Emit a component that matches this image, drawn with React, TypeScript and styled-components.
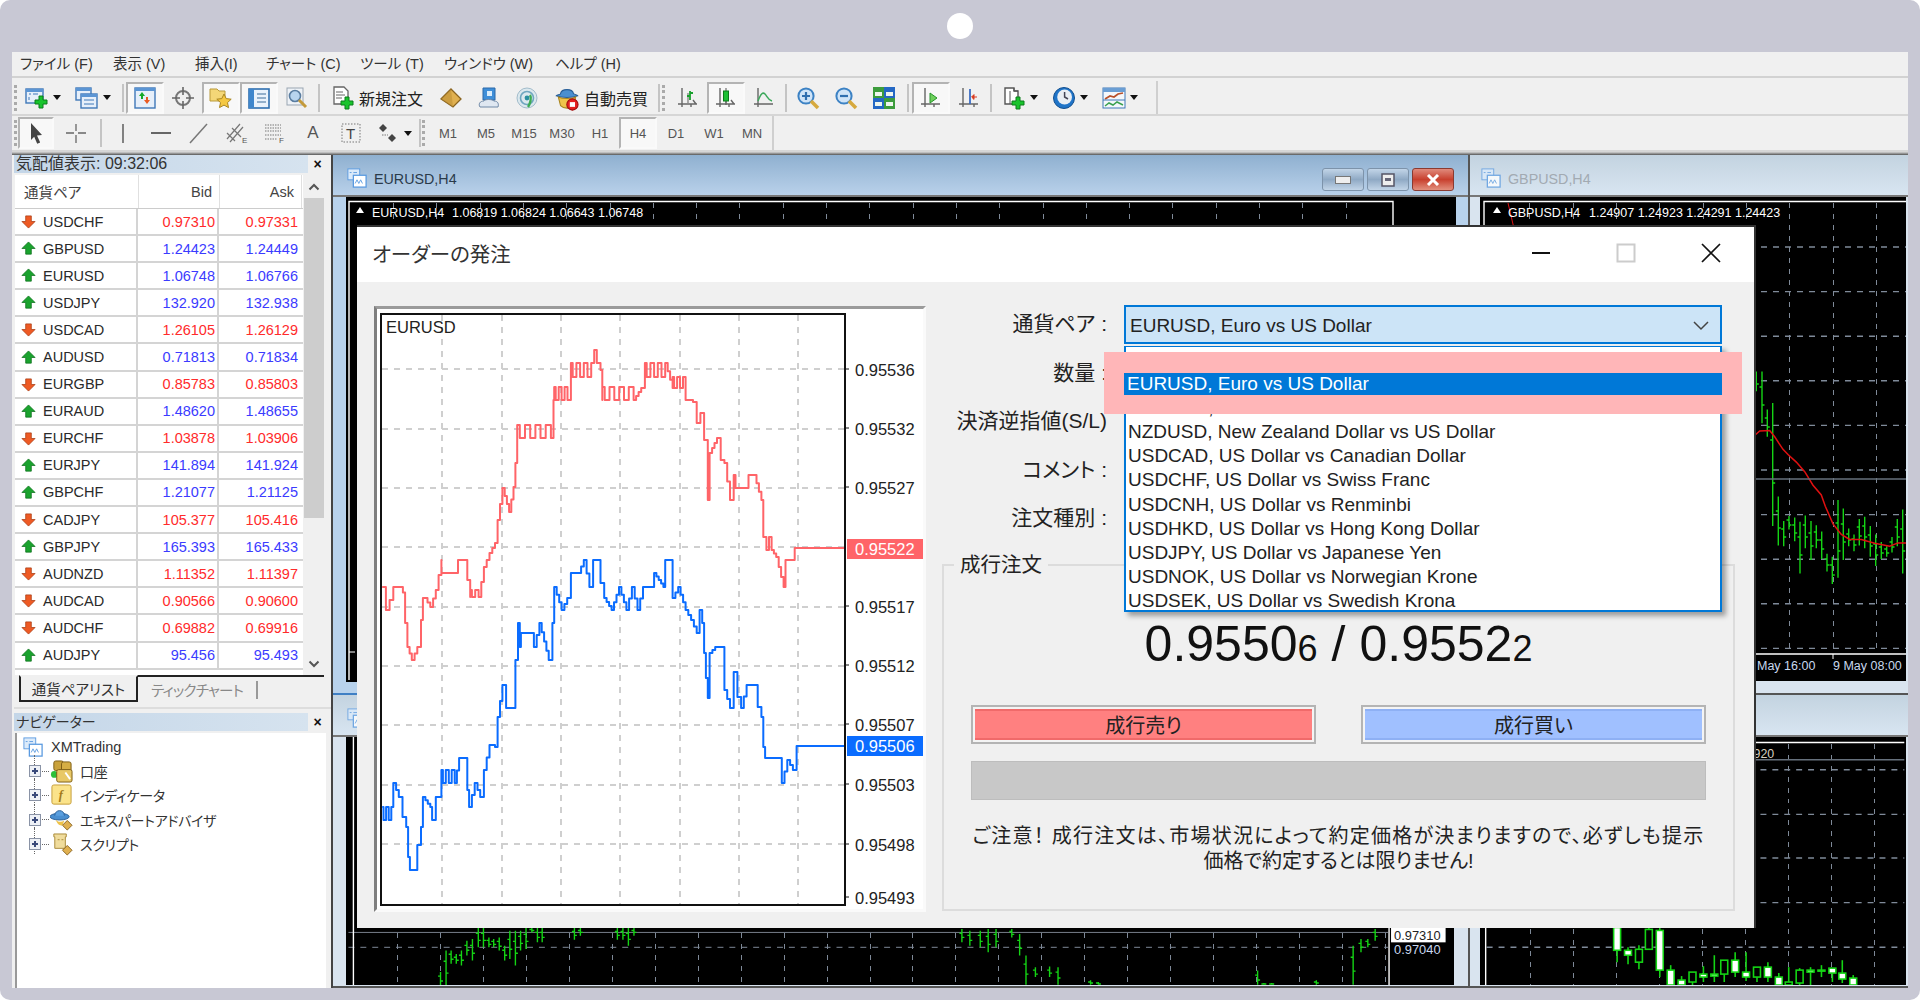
import React from "react";
import styled, { createGlobalStyle } from "styled-components";

const FONT = `"Liberation Sans", "Noto Sans CJK JP", sans-serif`;

const Global = createGlobalStyle`
  html, body { margin: 0; padding: 0; background: #fff; }
  body { font-family: ${FONT}; font-feature-settings: "palt"; color: #1c1c1c; }
  * { box-sizing: border-box; }
`;

/* ---------- shell ---------- */
const Stage = styled.div`
  width: 1920px; height: 1000px; background: #c8c8d4; border-radius: 10px;
  padding: 0 12px 12px; display: flex; flex-direction: column; overflow: hidden;
`;
const StageTop = styled.div`height: 52px; display: flex; align-items: center; justify-content: center; flex: none;`;
const Dot = styled.div`width: 26px; height: 26px; border-radius: 50%; background: #fff;`;
const Win = styled.div`flex: 1; min-height: 0; display: flex; flex-direction: column; background: #f0f0f0; overflow: hidden;`;

const MenuBar = styled.div`height: 26px; flex: none; display: flex; align-items: center; padding: 0 0 3px 8px; border-bottom: 2px solid #d2d2d2; font-size: 14.5px; color: #333;`;
const MenuItem = styled.span<{ $w: number }>`width: ${p => p.$w}px; flex: none; white-space: nowrap;`;

const ToolRow = styled.div<{ $h: number; $top?: number }>`height: ${p => p.$h}px; padding-top: ${p => p.$top ?? 0}px; flex: none; display: flex; border-bottom: 2px solid #d6d6d6;`;
const Tools = styled.div<{ $w: number }>`
  width: ${p => p.$w}px; flex: none; display: flex; align-items: center; border-right: 2px solid #cfcfcf; padding-left: 2px;
`;
const Grip = styled.i<{ $gap?: number }>`width: 4px; height: 26px; margin-right: ${p => p.$gap ?? 3}px; flex: none; border-left: 3px dotted #aaa;`;
const Sep = styled.i<{ $w?: number }>`width: ${p => p.$w ?? 6}px; height: 28px; flex: none; display: flex; justify-content: center; &::after { content: ""; width: 2px; background: #c4c4c4; }`;
const ToolBtn = styled.div<{ $w?: number; $on?: boolean }>`
  width: ${p => p.$w ?? 38}px; height: 32px; flex: none; display: flex; align-items: center; justify-content: center; gap: 4px;
  font-size: 16px; color: #222; white-space: nowrap;
  ${p => p.$on ? `background: #f8f8f8; border: 2px solid; border-color: #b4b4b4 #fafafa #fafafa #b4b4b4;` : ""}
`;
const TfBtn = styled(ToolBtn)`font-size: 13px; color: #555; letter-spacing: 0;`;
const Caret = styled.i`width: 0; height: 0; border: 4px solid transparent; border-top: 5px solid #111; border-bottom: 0; flex: none;`;

const DarkLine = styled.div`height: 3px; flex: none; background: linear-gradient(#d4d4d4, #555);`;
const Work = styled.div`flex: 1; min-height: 0; display: flex; position: relative;`;

/* ---------- left panel ---------- */
const Side = styled.div`width: 321px; flex: none; display: flex; flex-direction: column; padding-left: 2px; border-right: 2px solid #444; position: relative;`;
const PanelHead = styled.div`height: 18px; flex: none; display: flex; align-items: center; color: #333;`;
const PanelBar = styled.div<{ $size: number }>`width: 294px; height: 18px; padding-left: 2px; line-height: 18px; font-size: ${p => p.$size}px; background: linear-gradient(90deg, #c4d6e8, #d6e3ef); white-space: nowrap;`;
const PanelX = styled.b`flex: 1; text-align: center; font-size: 14px; color: #111; padding-right: 4px;`;
const WatchWrap = styled.div`height: 500px; flex: none; margin-top: 2px; display: flex; overflow: hidden; padding-left: 1px;`;
const Table = styled.div`width: 288px; flex: none; background: #fff; display: flex; flex-direction: column;`;
const HeadRow = styled.div`height: 34px; flex: none; display: grid; grid-template-columns: 124px 81px 82px; font-size: 14.5px; color: #444; border-bottom: 1px solid #ccc;`;
const HeadCell = styled.div<{ $right?: boolean }>`
  display: flex; align-items: center; justify-content: ${p => p.$right ? "flex-end" : "flex-start"};
  padding: 0 ${p => p.$right ? "7px" : "0"} 0 ${p => p.$right ? "0" : "9px"}; border-right: 1px solid #e0e0e0;
`;
const QuoteRow = styled.div`height: 27.1px; flex: none; display: grid; grid-template-columns: 123px 81px 84px; border-bottom: 2px solid #d4d4d4;`;
const NameCell = styled.div`display: flex; align-items: center; gap: 7px; padding-left: 6px; font-size: 14.5px; color: #2a2a2a; border-right: 2px solid #d4d4d4;`;
const PriceCell = styled.div<{ $up: boolean; $last?: boolean }>`
  display: flex; align-items: center; justify-content: flex-end; padding-right: ${p => p.$last ? "5px" : "2px"};
  font-size: 14.5px; color: ${p => p.$up ? "#3b3bff" : "#ff2b2b"}; ${p => p.$last ? "" : "border-right: 2px solid #d4d4d4;"}
`;
const Scroll = styled.div`width: 21px; margin-left: 0; flex: none; display: flex; flex-direction: column; align-items: center; background: #f0f0f0;`;
const ScrollEnd = styled.div`height: 23px; flex: none; display: flex; align-items: center; justify-content: center;`;
const ScrollThumb = styled.div`width: 20px; height: 320px; background: #cdcdcd; flex: none;`;
const ScrollRest = styled.div`flex: 1;`;
const Tabs = styled.div`height: 32px; flex: none; display: flex; border-top: 2px solid #222; margin-left: 5px; margin-right: 7px; font-size: 14.5px;`;
const Tab = styled.div`width: 119px; height: 27px; margin-top: -2px; border: 2px solid #222; border-top: 2px solid #f0f0f0; border-right-width: 2px; background: #f0f0f0; display: flex; align-items: center; justify-content: center; color: #333;`;
const TabOff = styled.div`padding-left: 13px; height: 25px; display: flex; align-items: center; color: #888; white-space: nowrap; letter-spacing: -.8px; &::after { content: ""; width: 2px; height: 18px; background: #999; margin-left: 13px; }`;
const NavGap = styled.div`height: 6px; flex: none; border-top: 2px solid #ddd;`;
const NavTree = styled.div`flex: 1; margin: 2px 5px 0 1px; background: #fff; border-left: 2px solid #999; padding-top: 2px; font-size: 14.5px; color: #333;`;
const TreeRoot = styled.div`height: 24px; display: flex; align-items: center; gap: 8px; padding-left: 6px;`;
const TreeRow = styled.div`height: 24.3px; display: flex; align-items: center; padding-left: 12px; position: relative;
  &::before { content: ""; position: absolute; left: 17px; top: -4px; height: 26px; border-left: 1px dotted #666; }
`;
const PlusBox = styled.div`width: 12px; height: 12px; border: 1px solid #8a93a6; background: #eef1f6; position: relative; z-index: 1; flex: none;
  &::before { content: ""; position: absolute; left: 2px; right: 2px; top: 4px; height: 2px; background: #3a4a7a; }
  &::after { content: ""; position: absolute; top: 2px; bottom: 2px; left: 4px; width: 2px; background: #3a4a7a; }
`;
const TreeDots = styled.i`width: 7px; border-top: 1px dotted #666; margin: 0 1px 0 1px; flex: none;`;
const TreeLabel = styled.span`margin-left: 7px; white-space: nowrap; font-size: 14px; letter-spacing: -.3px;`;

/* ---------- MDI ---------- */
const Mdi = styled.div`flex: 1; min-width: 0; display: grid; grid-template-columns: 1137px 1fr; grid-template-rows: 540px 1fr; background: #3c3c3c;`;
const ChartWin = styled.div<{ $active?: boolean; $right?: boolean }>`
  display: flex; flex-direction: column; overflow: hidden; min-height: 0;
  padding: 0 ${p => p.$right ? "0" : "10px"} ${p => p.$right ? "0" : "10px"} ${p => p.$right ? "10px" : "13px"};
  background: ${p => p.$active ? "#b8d2ec" : "#d9e4ef"};
  border-right: ${p => p.$right ? "0" : "2px solid #555"};
  border-bottom: 2px solid ${p => p.$active ? "#3f7fc4" : "#555"};
`;
const ChartTitle = styled.div<{ $active?: boolean }>`
  height: 42px; flex: none; margin: 0 -10px 0 -13px; padding: 13px 14px 0 14px;
  display: flex; align-items: flex-start; gap: 7px; font-size: 14.3px; line-height: 22px;
  background: linear-gradient(${p => p.$active ? "#8fb0d0, #b9d1ea" : "#c3d3e0, #d8e5f1"});
  color: ${p => p.$active ? "#2a3a4a" : "#a2aab2"};
  border-bottom: 2px solid #777;
`;
const TitleBtns = styled.div`margin-left: auto; display: flex; gap: 3px;`;
const TitleBtn = styled.div<{ $close?: boolean }>`
  width: 42px; height: 23px; border: 1px solid ${p => p.$close ? "#8b3a30" : "#7d93aa"}; border-radius: 3px;
  background: linear-gradient(${p => p.$close ? "#e08a7c, #c8402e 50%, #e2907e" : "#c2d5e8, #8fa9c4 50%, #c2d5e8"});
  display: flex; align-items: center; justify-content: center;
`;
const ChartSvg = styled.svg`display: block; flex: none; background: #000;`;

/* ---------- dialog ---------- */
const Dialog = styled.div`
  position: absolute; left: 345px; top: 70px; width: 1399px; height: 703px; background: #f0f0f0;
  border-top: 2px solid #333; border-right: 2px solid #333; display: flex; flex-direction: column; color: #222;
`;
const DlgTitle = styled.div`height: 55px; flex: none; background: #fff; display: flex; align-items: center; padding: 0 0 4px 15px; font-size: 20.5px; color: #333;`;
const DlgCtl = styled.div`margin-left: auto; display: flex; align-items: center; gap: 65px; padding-right: 33px;`;
const DlgBody = styled.div`flex: 1; min-height: 0; display: flex; padding: 18px 19px 0 17px; gap: 16px;`;
const Sunken = styled.div`width: 552px; height: 606px; margin-top: 6px; flex: none; border: 3px solid; border-color: #9b9b9b #fafafa #fafafa #7e7e7e; background: #fff;`;
const Right = styled.div`flex: 1; min-width: 0; display: flex; flex-direction: column; position: relative;`;
const Form = styled.div`display: grid; grid-template-columns: 165px 598px; column-gap: 17px; grid-auto-rows: 48.5px; align-items: center; margin-bottom: 21.5px;`;
const Label = styled.div`text-align: right; font-size: 21px; white-space: nowrap; color: #222; padding-bottom: 4px;`;
const Combo = styled.div`height: 39px; margin-top: 1px; border: 2px solid #0078d7; background: #cce4f7; display: flex; align-items: center; justify-content: space-between; padding: 3px 11px 0 4px; font-size: 19px; color: #222;`;
const DropList = styled.div`
  position: absolute; left: 182px; top: 46px; width: 598px; height: 266px; background: #fff; z-index: 2; overflow: hidden;
  border: 2px solid #0078d7; border-top-width: 1px; box-shadow: 4px 4px 5px rgba(0,0,0,.35);
`;
const DropInner = styled.div`margin-top: 1px; font-size: 19px;`;
const DropItem = styled.div<{ $covered?: boolean }>`
  height: 24.1px; line-height: 24.1px; padding-left: 2px; white-space: nowrap; color: #222;
  ${p => p.$covered ? "visibility: hidden;" : ""}
`;
const Highlight = styled.div`
  position: absolute; left: 162px; top: 52px; width: 638px; height: 62px; background: #ffb6b8; z-index: 3;
  display: flex; align-items: center; padding-top: 2px;
`;
const HighlightItem = styled.div`width: 598px; margin-left: 20px; height: 22px; line-height: 22px; padding-left: 3px; background: #0078d7; color: #fff; font-size: 19px;`;
const Group = styled.div`height: 347px; border: 2px solid #dcdcdc; position: relative; display: flex; flex-direction: column; align-items: center; padding-top: 50px;`;
const Legend = styled.div`position: absolute; left: 10px; top: -13px; padding: 0 6px; background: #f0f0f0; font-size: 20.5px; line-height: 24px;`;
const Price = styled.div`height: 56px; display: flex; align-items: baseline; font-size: 50px; line-height: 56px; color: #111; white-space: nowrap; font-family: "Liberation Sans", sans-serif;`;
const PriceSmall = styled.span`font-size: 36px;`;
const PriceSlash = styled.span`margin: 0 14px;`;
const Actions = styled.div`width: 735px; margin-top: 33px; display: flex; justify-content: space-between;`;
const Trade = styled.div`width: 345px; height: 39px; padding: 2px; border: 2px solid #b4b4b4; background: #f4f4f4; font-size: 20px; color: #222; display: flex;`;
const TradeFace = styled.div<{ $buy?: boolean }>`
  flex: 1; display: flex; align-items: center; justify-content: center; background: ${p => p.$buy ? "#a0c0ff" : "#ff8080"};
  border-bottom: 2px solid ${p => p.$buy ? "#8eb0f4" : "#f06a6a"}; border-top: 2px solid ${p => p.$buy ? "#8eb0f4" : "#f06a6a"};
`;
const ProgressBar = styled.div`width: 735px; height: 39px; margin-top: 17px; background: #c8c8c8; border: 1px solid #bdbdbd;`;
const Note = styled.div`width: 760px; margin-top: 24px; text-align: center; font-size: 20px; line-height: 24.5px; color: #222; white-space: nowrap;`;
const NoteWide = styled.span`letter-spacing: 1.24px;`;

/* ---------- icons ---------- */
const Ico: React.FC<{ s?: number; children: React.ReactNode }> = ({ s = 24, children }) => (
  <svg viewBox="0 0 24 24" width={s} height={s} style={{ flex: "none", display: "block" }}>{children}</svg>
);
const GreenPlus = ({ x = 11, y = 11 }: { x?: number; y?: number }) => (
  <path transform={`translate(${x} ${y})`} d="M4 0h4v4h4v4H8v4H4V8H0V4h4z" fill="#18c42c" stroke="#0a7d1a" strokeWidth="1" />
);
const MiniWin = ({ x, y, w, h }: { x: number; y: number; w: number; h: number }) => (
  <g><rect x={x} y={y} width={w} height={h} fill="#e6effa" stroke="#3f78b8" strokeWidth="1.4" /><rect x={x} y={y} width={w} height="3" fill="#5b95d4" /></g>
);
const Axes = () => (
  <g stroke="#666" strokeWidth="1.4" fill="none"><path d="M6 2v19M2 18h19M17 14l3 4M15 18v3" /><path d="M12 7v11" stroke="#888" /></g>
);
const NewChartI = () => <Ico><MiniWin x={1} y={3} w={17} h={14} /><path d="M4 8h2M4 11v3M8 8h5" stroke="#3f78b8" fill="none" /><GreenPlus x={10} y={10} /></Ico>;
const ProfilesI = () => <Ico><MiniWin x={1} y={2} w={15} h={12} /><MiniWin x={6} y={8} w={16} h={14} /><path d="M9 14h10M9 18h10" stroke="#3f78b8" /></Ico>;
const WatchI = () => <Ico><MiniWin x={2} y={2} w={20} h={20} /><path d="M9 6l3 4H10v3H8v-3H6z" fill="#12a82a" /><path d="M14 18l-3-4h2v-3h2v3h2z" fill="#ea5a22" /></Ico>;
const CrossI = () => <Ico><circle cx="12" cy="12" r="7" fill="none" stroke="#777" strokeWidth="2" /><path d="M12 1v8M12 15v8M1 12h8M15 12h8" stroke="#666" strokeWidth="1.6" /></Ico>;
const NavI = () => <Ico><path d="M1 3h7l2 2h6v10H1z" fill="#f4d777" stroke="#b99a3a" /><path d="M15 8l2.2 4.6 5 .6-3.7 3.4 1 5-4.5-2.5-4.5 2.5 1-5-3.7-3.4 5-.6z" fill="#f5c842" stroke="#a98520" /></Ico>;
const TermI = () => <Ico><rect x="2" y="3" width="20" height="19" fill="#eaf2fb" stroke="#2f6fb0" strokeWidth="1.6" /><rect x="2" y="3" width="5" height="19" fill="#3f86cc" /><path d="M10 8h9M10 12h9M10 16h9" stroke="#7799bb" strokeWidth="1.4" /></Ico>;
const TesterI = () => <Ico><rect x="2" y="2" width="16" height="17" fill="#eef2f7" stroke="#99a5b2" /><circle cx="10" cy="10" r="5.5" fill="#b8d4ee" stroke="#5a7da0" strokeWidth="1.6" /><path d="M14 14l7 7" stroke="#c49a3a" strokeWidth="3" /></Ico>;
const OrderI = () => <Ico><path d="M3 1h10l4 4v13H3z" fill="#fff" stroke="#666" strokeWidth="1.3" /><path d="M5 6h7M5 9h9M5 12h6" stroke="#666" /><GreenPlus x={10} y={11} /></Ico>;
const DiamondI = () => <Ico><path d="M12 3l10 10-8 8L2 13z" fill="#e0b050" stroke="#8a6420" strokeWidth="1.3" /><path d="M12 3l-10 10 12 8z" fill="#b88a30" opacity=".5" /></Ico>;
const MarketI = () => <Ico><path d="M6 2h12v12H6z" fill="#3e8ed8" stroke="#2a68a8" /><path d="M10 5h5v5h-5z" fill="#d9ecfb" /><path d="M3 21c-2-3 0-6 4-6 1-2 8-2 10 0 4 0 5 3 4 6z" fill="#dfe7f1" stroke="#6f88a6" /></Ico>;
const SignalI = () => <Ico><circle cx="12" cy="12" r="10" fill="#dbe8ee" stroke="#a2bccb" /><circle cx="12" cy="12" r="6.5" fill="none" stroke="#6fa6bf" strokeWidth="1.6" /><path d="M15 9c2 3 0 9-2 12" stroke="#3cab54" strokeWidth="2.4" fill="none" /><circle cx="12" cy="12" r="2.4" fill="#2a8fa0" /></Ico>;
const AutoI = () => <Ico s={26}><path d="M2 10c0-1 4-1 4-2 1-5 11-5 12 0 1 1 4 1 4 2-5 2-15 2-20 0z" fill="#4a8fd0" stroke="#2a5f98" /><path d="M4 11c4 2 12 2 16 0l-2 9c-3 2-9 2-12-1z" fill="#efc34a" stroke="#a98520" /><circle cx="17" cy="18" r="5.2" fill="#e62020" stroke="#a01010" /><rect x="14.6" y="15.8" width="4.8" height="4.4" fill="#fff" /></Ico>;
const BarI = () => <Ico><Axes /><path d="M14 5v9M11 10h3M14 7h3" stroke="#18a02c" strokeWidth="1.8" fill="none" /></Ico>;
const CandleI = () => <Ico><Axes /><path d="M12 2v17" stroke="#555" /><rect x="9.5" y="5" width="5" height="10" fill="#1cc034" stroke="#0c7a1c" /></Ico>;
const LineI = () => <Ico><g stroke="#666" strokeWidth="1.4" fill="none"><path d="M6 2v19M2 18h19" /></g><path d="M6 15c3-8 5-9 7-7s3 6 7 7" stroke="#3aa85a" strokeWidth="1.5" fill="none" /></Ico>;
const Lens = ({ minus }: { minus?: boolean }) => (
  <Ico><circle cx="10" cy="10" r="7.6" fill="#cfe4f8" stroke="#3c82c4" strokeWidth="2" /><path d="M15 15l7 7" stroke="#d6a93e" strokeWidth="3.6" /><path d={minus ? "M6 10h8" : "M6 10h8M10 6v8"} stroke="#2f6fb0" strokeWidth="2.2" /></Ico>
);
const TileI = () => <Ico><rect x="1" y="1" width="11" height="11" fill="#3c9c3c" /><rect x="12" y="1" width="11" height="11" fill="#2468c4" /><rect x="1" y="12" width="11" height="11" fill="#2468c4" /><rect x="12" y="12" width="11" height="11" fill="#3c9c3c" /><path d="M3 6h7v4H3zM14 6h7v4h-7zM3 16h7v4H3zM14 16h7v4h-7z" fill="#eef6ee" /></Ico>;
const ScrollI = () => <Ico><g stroke="#666" strokeWidth="1.4" fill="none"><path d="M6 2v19M2 18h19M15 18v3" /></g><path d="M11 7l7 5-7 5z" fill="#6fd05c" stroke="#28952c" /></Ico>;
const ShiftI = () => <Ico><g stroke="#666" strokeWidth="1.4" fill="none"><path d="M6 2v19M2 18h19M17 18v3" /></g><path d="M13 3v15" stroke="#3a6cc4" strokeWidth="1.8" /><path d="M20 11h-3V8.6L14.6 11l2.4 2.4V11" fill="#d83a20" stroke="#d83a20" /></Ico>;
const TemplI = () => <Ico><path d="M3 2h9v3h4v13H3z" fill="#fff" stroke="#555" strokeWidth="1.4" /><path d="M8 5v13M12 2v3h4" stroke="#555" fill="none" /><GreenPlus x={10} y={11} /></Ico>;
const ClockI = () => <Ico><circle cx="12" cy="12" r="10.5" fill="#1f74c8" stroke="#134f8f" /><circle cx="12.6" cy="11" r="7.4" fill="#e9eef4" /><path d="M12.6 6v5l3.4 2" stroke="#445" strokeWidth="1.5" fill="none" /></Ico>;
const IndI = () => <Ico><rect x="1" y="2" width="22" height="20" fill="#f4f7fb" stroke="#3f78b8" /><rect x="1" y="2" width="22" height="4" fill="#6a9ed4" /><path d="M3 13l5-3 4 1 4-3 5-1" stroke="#b8502a" strokeWidth="1.7" fill="none" /><path d="M1 14h22" stroke="#3f78b8" /><path d="M3 20l4-3 4 2 4-3 6 3" stroke="#3aa050" strokeWidth="1.5" fill="none" /></Ico>;
const CursorI = () => <Ico><path d="M7 2l11 12-5 .4 3.2 7-3 1.4-3-7L7 19z" fill="#444" /></Ico>;
const ThinCross = () => <Ico><path d="M12 3v7M12 14v8M2 12h8M14 12h8" stroke="#666" strokeWidth="1.3" /></Ico>;
const VertI = () => <Ico><path d="M12 3v19" stroke="#666" strokeWidth="1.6" /></Ico>;
const HorzI = () => <Ico><path d="M2 12h20" stroke="#666" strokeWidth="1.8" /></Ico>;
const TrendI = () => <Ico><path d="M3 22L20 3" stroke="#777" strokeWidth="1.5" /></Ico>;
const ChanI = () => <Ico><path d="M2 18L15 3M5 21L18 6M2 12l8 8M7 7l9 9" stroke="#777" strokeWidth="1.2" /><text x="17" y="22" fontSize="8" fill="#555" fontFamily="Liberation Sans">E</text></Ico>;
const FibI = () => <Ico><path d="M2 4h16M2 7h16M2 10h16M2 14h16M2 18h12" stroke="#777" strokeWidth="1.1" strokeDasharray="1.5 1" /><text x="16" y="22" fontSize="8" fill="#555" fontFamily="Liberation Sans">F</text></Ico>;
const LetterA = styled.span`font-size: 17px; color: #555; font-weight: 500;`;
const TextBoxI = () => <Ico><rect x="3" y="3" width="18" height="18" fill="none" stroke="#777" strokeDasharray="1.5 1.5" /><text x="7" y="18" fontSize="15" fill="#444" fontFamily="Liberation Sans">T</text></Ico>;
const ArrowsI = () => <Ico><path d="M7 3l4 4-4 4-4-4z" fill="#444" /><path d="M16 13l4 4-4 4-4-4z" fill="#444" /><path d="M6 14l6 0" stroke="#777" strokeDasharray="1.5 1" /></Ico>;

const ArrowUpI = () => <svg viewBox="0 0 16 16" width="15" height="15" style={{ flex: "none" }}><path d="M8 1l7 7h-4v6H5V8H1z" fill="#1aa32e" stroke="#0d6f1c" strokeWidth=".8" /></svg>;
const ArrowDownI = () => <svg viewBox="0 0 16 16" width="15" height="15" style={{ flex: "none" }}><path d="M5 2h6v6h4l-7 7-7-7h4z" fill="#ee5a24" stroke="#a83a10" strokeWidth=".8" /></svg>;
const ChartsDocI = ({ faded }: { faded?: boolean }) => (
  <svg viewBox="0 0 22 22" width="20" height="20" style={{ flex: "none", opacity: faded ? .8 : 1 }}>
    <rect x="1" y="1" width="13" height="12" fill="#dcebfa" stroke="#5a9ae0" /><rect x="7" y="8" width="14" height="13" fill="#fff" stroke="#5a9ae0" strokeWidth="1.4" />
    <path d="M3 5h2M7 5h4M9 17l2-4 2 4 2-4 2 4" stroke="#5a9ae0" fill="none" />
  </svg>
);
const TreeI: React.FC<{ children: React.ReactNode }> = ({ children }) => <svg viewBox="0 0 24 24" width="23" height="23" style={{ flex: "none" }}>{children}</svg>;
const AccI = () => <TreeI><circle cx="4.5" cy="15" r="3.5" fill="#2cc03a" /><rect x="4" y="1" width="10" height="10" rx="2" fill="#c9a13a" stroke="#7c5c14" /><rect x="12" y="2" width="10" height="10" rx="2" fill="#d6ae44" stroke="#7c5c14" /><rect x="7" y="10" width="16" height="13" rx="2" fill="#e8c866" stroke="#7c5c14" /><path d="M16 13l5 7" stroke="#fff" strokeWidth="2" /></TreeI>;
const IndTreeI = () => <TreeI><rect x="2" y="1" width="20" height="20" rx="2" fill="#fbe38a" stroke="#c49d3a" /><text x="9" y="16" fontSize="13" fontStyle="italic" fontWeight="700" fill="#a37a1a" fontFamily="Liberation Serif">f</text></TreeI>;
const ExpertI = () => <TreeI><ellipse cx="10" cy="9" rx="10" ry="3.5" fill="#4a8fd0" stroke="#2a5f98" /><path d="M5 8c0-7 10-7 10 0" fill="#5a9fdf" stroke="#2a5f98" /><path d="M6 12c2 3 6 3 9 1l-2 5c-3 1-6-2-7-6z" fill="#efc34a" /><path d="M18 13l5 5-5 5-5-5z" fill="#e0b050" stroke="#8a6420" /></TreeI>;
const ScriptI = () => <TreeI><path d="M4 1h13v3h-1v12H5V4H4z" fill="#f0dc9c" stroke="#a98a38" /><path d="M8 7h2M12 7h2" stroke="#a98a38" /><path d="M18 13l5 5-5 5-5-5z" fill="#e0b050" stroke="#8a6420" /></TreeI>;

/* ---------- data ---------- */
const quotes: [string, boolean, string, string][] = [
  ["USDCHF", false, "0.97310", "0.97331"], ["GBPUSD", true, "1.24423", "1.24449"],
  ["EURUSD", true, "1.06748", "1.06766"], ["USDJPY", true, "132.920", "132.938"],
  ["USDCAD", false, "1.26105", "1.26129"], ["AUDUSD", true, "0.71813", "0.71834"],
  ["EURGBP", false, "0.85783", "0.85803"], ["EURAUD", true, "1.48620", "1.48655"],
  ["EURCHF", false, "1.03878", "1.03906"], ["EURJPY", true, "141.894", "141.924"],
  ["GBPCHF", true, "1.21077", "1.21125"], ["CADJPY", false, "105.377", "105.416"],
  ["GBPJPY", true, "165.393", "165.433"], ["AUDNZD", false, "1.11352", "1.11397"],
  ["AUDCAD", false, "0.90566", "0.90600"], ["AUDCHF", false, "0.69882", "0.69916"],
  ["AUDJPY", true, "95.456", "95.493"],
];
const symbols = [
  "AUDUSD, Australian Dollar vs US Dollar",
  "EURUSD, Euro vs US Dollar",
  "GBPUSD, Great Britain Pound vs US Dollar",
  "NZDUSD, New Zealand Dollar vs US Dollar",
  "USDCAD, US Dollar vs Canadian Dollar",
  "USDCHF, US Dollar vs Swiss Franc",
  "USDCNH, US Dollar vs Renminbi",
  "USDHKD, US Dollar vs Hong Kong Dollar",
  "USDJPY, US Dollar vs Japanese Yen",
  "USDNOK, US Dollar vs Norwegian Krone",
  "USDSEK, US Dollar vs Swedish Krona",
];

type P = [number, number];
const zig = (x0: number, x1: number, a: number, b: number, step = 12): P[] => {
  const out: P[] = []; let i = 0;
  for (let x = x0; x < x1; x += step, i++) { out.push([x, i % 2 ? b : a]); out.push([x + step * .5, i % 2 ? a : b]); }
  return out;
};
const redTrace: P[] = [
  [60,587],[70,610],[80,600],[90,587],[110,587],[122,598],[122,623],[128,647],[140,660],[155,647],[165,620],[170,598],[175,598],[190,607],[205,590],[220,560],[220,573],[260,573],[265,560],[285,560],[290,580],[298,597],
  ...zig(298,325,590,597,9),[335,567],[350,553],[365,543],[372,520],[385,488],[403,512],[415,487],[420,463],[425,425],...zig(425,520,425,438,14),[523,400],...zig(525,565,387,400,8),[570,363],...zig(570,625,363,377,10),[633,350],[640,363],[650,370],[655,400],...zig(655,745,387,400,13),[760,388],[770,363],...zig(770,830,363,377,10),[845,388],...zig(845,870,377,388,8),[880,400],[900,402],[910,423],[920,413],[930,440],[940,500],[945,453],[965,438],[975,460],[985,463],[1000,500],[1010,475],[1015,488],[1045,488],[1050,475],[1065,475],[1085,500],[1090,537],...zig(1095,1115,537,550,7),[1125,557],[1145,587],[1150,560],[1170,560],[1175,548],[1310,548],
];
const blueTrace: P[] = [
  [60,807],...zig(60,82,807,820,7),[90,783],[105,797],[115,817],[125,827],[130,857],[135,870],[150,870],[155,845],[165,827],[170,797],[190,807],[195,820],[205,797],[215,797],[220,770],...zig(220,260,770,783,8),[268,758],[285,758],[290,790],[295,807],[310,783],[325,797],[335,770],[350,745],[365,747],[372,717],[385,685],[395,708],[410,708],[420,660],[427,623],[432,647],[435,633],[470,633],[470,647],[485,623],[510,660],[520,623],[525,587],[545,610],[560,598],[570,573],[590,573],[605,560],[620,587],[630,560],[640,560],[650,583],[660,598],[680,610],[700,587],[720,610],[735,587],[750,610],[765,587],[790,587],[795,573],[820,587],[825,560],[835,560],[845,598],[860,587],[880,610],[895,620],[910,633],[918,610],[925,623],[930,653],[935,678],[940,698],[945,653],[960,647],[975,647],[985,667],[985,690],[1000,708],[1010,672],[1020,697],[1030,708],[1045,685],[1065,685],[1075,707],[1085,717],[1090,747],[1095,758],[1130,758],[1140,783],[1155,760],[1170,770],[1180,746],[1310,746],
];
/* turns the traced points into the stair-step line the terminal draws */
const tracePts = (t: P[]) => {
  const out: string[] = [];
  t.forEach(([zx, y], i) => {
    const x = 360 + zx / 2.703;
    if (i === 0) { out.push(`${x.toFixed(1)},${y}`); return; }
    const [pzx, py] = t[i - 1];
    const px = 360 + pzx / 2.703;
    const dx = x - px, dy = y - py;
    const n = Math.max(1, Math.round(Math.abs(dy) > 3 ? dx / 2.5 : 1));
    for (let k = 1; k <= n; k++) {
      const sx = px + dx * k / n;
      const prevY = py + dy * (k - 1) / n;
      out.push(`${sx.toFixed(1)},${prevY.toFixed(1)}`);
      out.push(`${sx.toFixed(1)},${(py + dy * k / n).toFixed(1)}`);
    }
  });
  return out.join(" ");
};

const axisLabels: [string, number][] = [["0.95536",370],["0.95532",429],["0.95527",488],["0.95517",607],["0.95512",666],["0.95507",725],["0.95503",785],["0.95498",845],["0.95493",898]];
const gridX = [442, 502, 561, 620, 680, 739, 798];
const gridY = [369, 429, 488, 547, 607, 666, 725, 785, 844];

const PreviewChart = () => (
  <svg viewBox="377 309 546 600" width={546} height={600} style={{ display: "block" }} fontFamily="Liberation Sans" fontSize="16.5">
    {gridX.map(x => <path key={x} d={`M${x} 315V904`} stroke="#cfcfcf" strokeWidth="2" strokeDasharray="6 6" shapeRendering="crispEdges" />)}
    {gridY.map(y => <path key={y} d={`M382 ${y}H845`} stroke="#cfcfcf" strokeWidth="2" strokeDasharray="6 6" shapeRendering="crispEdges" />)}
    <polyline points={tracePts(redTrace)} fill="none" stroke="#ff6468" strokeWidth="2" strokeLinejoin="round" />
    <polyline points={tracePts(blueTrace)} fill="none" stroke="#0a6cff" strokeWidth="2" strokeLinejoin="round" />
    <rect x="381" y="314" width="464" height="591" fill="none" stroke="#111" strokeWidth="2" />
    <text x="386" y="333" fill="#222">EURUSD</text>
    {axisLabels.map(([t, y]) => <g key={t}><path d={`M845 ${y - 1}h4`} stroke="#111" /><text x="855" y={y + 6} fill="#222">{t}</text></g>)}
    <rect x="847" y="539" width="76" height="20" fill="#ff6468" /><text x="855" y="555" fill="#fff">0.95522</text>
    <rect x="847" y="736" width="76" height="20" fill="#0a6cff" /><text x="855" y="752" fill="#fff">0.95506</text>
  </svg>
);

type Bar = [number, number, number];
const grBars: Bar[] = [
  [55,75,122],[72,75,198],[88,165,230],[104,150,442],[121,372,488],[137,430,490],[153,418,450],[170,422,478],[186,432,555],[202,417,495],[219,430,523],[235,440,495],[251,455,520],[267,508,550],[283,515,580],[300,380,565],[316,400,523],[332,448,490],[348,462,502],[364,425,488],[380,420,495],[397,442,515],[413,462,537],[430,480,520],[446,490,515],[462,468,505],[478,425,490],[494,403,555],
];
const maPts = [[48,228],[65,216],[95,215],[110,230],[135,260],[150,272],[175,290],[200,313],[225,345],[250,368],[262,395],[285,437],[310,462],[335,474],[370,474],[410,483],[455,490],[480,482],[504,482]]
  .map(([x, y]) => `${(1740 + x / 3).toFixed(1)},${(340 + y / 2.376).toFixed(1)}`).join(" ");

const blBars1: Bar[] = [[316,990,1050],[330,990,1050],[345,1020,1050],[358,1025,1050],[373,1020,1060],[388,1045,1090],[402,1000,1085],[417,1000,1105],[431,1000,1060],[446,990,1055],[462,990,1005],[477,990,1035],[490,990,1035],[578,990,1027],[594,990,1015],[695,990,1027],[710,990,1027],[725,990,1045],[740,990,1015],[300,1025,1090],[285,1030,1075],[270,1060,1105],[256,1070,1100],[242,1060,1100],[228,1060,1165],[213,1125,1165]];
const blBars2: Bar[] = [[65,935,975],[80,940,985],[100,940,990],[115,935,1005],[130,935,990],[160,935,960],[175,950,1015],[187,1015,1103],[205,1050,1080],[232,1048,1080],[248,1050,1103],[310,1090,1103],[628,1060,1103],[740,1090,1103],[810,985,1103],[825,965,1005],[838,965,990],[852,935,970],[640,1098,1103],[655,1098,1103],[325,1095,1103]];

const dashed = "#7f8a99";
const rng = (a: number, n: number, s: number) => Array.from({ length: n }, (_, i) => a + i * s);

/* an OHLC bar: stem, open tick to the left, close tick to the right */
const Ohlc = ({ x, a, b }: { x: number; a: number; b: number }) => {
  const o = Math.round(a + (b - a) * .3), c = Math.round(a + (b - a) * .65);
  return <path d={`M${x} ${a}V${b}M${x - 2.5} ${o}H${x}M${x} ${c}H${x + 2.5}`} stroke="#14d414" strokeWidth="1.4" fill="none" />;
};

const TopLeftChart = () => (
  <ChartSvg viewBox="348 197 1110 485" width={1110} height={485} fontFamily="Liberation Sans" fontSize="12.5">
    {rng(395.5, 23, 43.3).map(x => <path key={x} d={`M${x} 203V226`} stroke={dashed} strokeDasharray="5 6" shapeRendering="crispEdges" />)}
    <path d="M351 680V201.5H1395V226" stroke="#fff" strokeWidth="1.4" fill="none" />
    <path d="M351 652H357" stroke="#fff" />
    <path d="M358 213l4-6 4 6z" fill="#fff" />
    <text x="374" y="217" fill="#fff">EURUSD,H4</text>
    <text x="454" y="217" fill="#fff">1.06819 1.06824 1.06643 1.06748</text>
  </ChartSvg>
);
const BottomLeftChart = () => (
  <ChartSvg viewBox="348 738 1108 250" width={1108} height={248} fontFamily="Liberation Sans" fontSize="13">
    <path d="M346 950H1394" stroke={dashed} strokeDasharray="6 6" />
    <path d="M346 935H1394" stroke="#77808c" />
    {rng(395.5, 24, 43.3).map(x => <path key={x} d={`M${x} 925V988`} stroke={dashed} strokeDasharray="5 6" shapeRendering="crispEdges" />)}
    {blBars1.map(([x, a, b], i) => <Ohlc key={"a" + i} x={+(360 + x / 2.703).toFixed(1)} a={600 + a / 3} b={600 + b / 3} />)}
    {blBars2.map(([x, a, b], i) => <Ohlc key={"b" + i} x={+(930 + x / 1.889).toFixed(1)} a={620 + a / 3} b={620 + b / 3} />)}
    <path d="M351 738V988M1395 738V988" stroke="#fff" strokeWidth="1.4" />
    <rect x="1397" y="925" width="55" height="20" fill="#fff" /><text x="1400" y="943" fill="#222">0.97310</text>
    <text x="1400" y="957" fill="#c8d8ee">0.97040</text>
  </ChartSvg>
);
const TopRightChart = () => (
  <ChartSvg viewBox="1482 197 426 484" width={426} height={484} fontFamily="Liberation Sans" fontSize="12.5">
    {rng(247, 10, 44.6).map(y => <path key={y} d={`M1487 ${y}H1908`} stroke={dashed} strokeDasharray="6 6" strokeWidth="1.4" />)}
    {[1531, 1575, 1618, 1661, 1705, 1748, 1791, 1835, 1878].map(x => <path key={x} d={`M${x} 203V653`} stroke={dashed} strokeDasharray="5 6" shapeRendering="crispEdges" />)}
    <path d="M1486 660V201.5H1908" stroke="#fff" strokeWidth="1.4" fill="none" />
    <path d="M1510 203l8 34" stroke="#e01010" />
    <path d="M1495 213l4-6 4 6z" fill="#fff" />
    <text x="1510" y="217" fill="#fff">GBPUSD,H4</text>
    <text x="1591" y="217" fill="#fff">1.24907 1.24923 1.24291 1.24423</text>
    {grBars.map(([x, a, b], i) => <Ohlc key={i} x={+(1740 + x / 3).toFixed(1)} a={+(340 + a / 2.376).toFixed(1)} b={+(340 + b / 2.376).toFixed(1)} />)}
    <polyline points={maPts} fill="none" stroke="#e01010" strokeWidth="1.5" />
    <path d="M1487 479H1908" stroke="#66707c" strokeWidth="1.6" />
    <path d="M1487 654H1908" stroke="#fff" strokeWidth="1.4" /><path d="M1835 654v5" stroke="#fff" />
    <text x="1759" y="670" fill="#c8d8ee">May 16:00</text>
    <text x="1835" y="670" fill="#c8d8ee">9 May 08:00</text>
  </ChartSvg>
);
type Candle = [number, number, number, number, number, boolean];
const candles: Candle[] = [
  [1618, 930, 953, 930, 965, true], [1629, 953, 958, 950, 967, true], [1640, 952, 965, 948, 972, false], [1650, 932, 952, 930, 952, false], [1661, 933, 973, 930, 980, true], [1672, 973, 988, 968, 988, true],
  [1683, 983, 988, 979, 988, true], [1694, 975, 985, 975, 988, false], [1705, 977, 980, 969, 985, true], [1716, 977, 979, 958, 985, true], [1726, 963, 977, 963, 985, false], [1737, 963, 975, 955, 980, true],
  [1748, 975, 980, 955, 984, true], [1759, 970, 980, 970, 985, false], [1770, 970, 980, 965, 985, true], [1781, 980, 988, 976, 988, true], [1791, 985, 988, 970, 988, false], [1802, 973, 986, 971, 988, false],
  [1813, 973, 975, 970, 988, true], [1824, 973, 974, 968, 980, true], [1835, 971, 976, 971, 985, true], [1845, 976, 982, 963, 986, true], [1856, 981, 988, 978, 988, true],
];
const BottomRightChart = () => (
  <ChartSvg viewBox="1482 738 426 250" width={426} height={248} fontFamily="Liberation Sans" fontSize="12.5">
    {[771, 816, 860, 905, 950].map(y => <path key={y} d={`M1487 ${y}H1908`} stroke={dashed} strokeDasharray="6 6" strokeWidth="1.4" />)}
    {[1531, 1575, 1618, 1661, 1705, 1748, 1791, 1835, 1878].map(x => <path key={x} d={`M${x} 745V988`} stroke={dashed} strokeDasharray="5 6" shapeRendering="crispEdges" />)}
    <path d="M1486 988V743.5H1908" stroke="#fff" strokeWidth="1.4" fill="none" />
    <path d="M1487 761H1908" stroke="#66707c" strokeWidth="1.6" />
    <text x="1756" y="759" fill="#d8d0c0">920</text>
    <path d="M1755 790v60" stroke="#14d414" />
    {candles.map(([x, t, b, wt, wb, fill], i) => (
      <g key={i}>
        <path d={`M${x + .5} ${wt}V${wb}`} stroke="#14d414" strokeWidth="1.6" />
        <rect x={x - 3} y={t} width="7" height={Math.max(b - t, 1)} fill={fill ? "#fff" : "#000"} stroke="#14d414" strokeWidth="1.6" />
      </g>
    ))}
  </ChartSvg>
);

/* ---------- page ---------- */
const ChevUp = () => <svg width="12" height="8" viewBox="0 0 12 8"><path d="M1.5 6.5L6 2l4.5 4.5" fill="none" stroke="#555" strokeWidth="2" /></svg>;
const ChevDown = () => <svg width="12" height="8" viewBox="0 0 12 8"><path d="M1.5 1.5L6 6l4.5-4.5" fill="none" stroke="#555" strokeWidth="2" /></svg>;

const Toolbar1 = () => (
  <ToolRow $h={38} $top={3}>
    <Tools $w={1146}>
      <Grip />
      <ToolBtn $w={44}><NewChartI /><Caret /></ToolBtn>
      <ToolBtn $w={55}><ProfilesI /><Caret /></ToolBtn>
      <Sep />
      <ToolBtn $on><WatchI /></ToolBtn>
      <ToolBtn><CrossI /></ToolBtn>
      <ToolBtn $on><NavI /></ToolBtn>
      <ToolBtn $on><TermI /></ToolBtn>
      <ToolBtn><TesterI /></ToolBtn>
      <Sep />
      <ToolBtn $w={110}><OrderI /><span>新規注文</span></ToolBtn>
      <ToolBtn><DiamondI /></ToolBtn>
      <ToolBtn><MarketI /></ToolBtn>
      <ToolBtn><SignalI /></ToolBtn>
      <ToolBtn $w={110}><AutoI /><span>自動売買</span></ToolBtn>
      <Sep />
      <Grip />
      <ToolBtn><BarI /></ToolBtn>
      <ToolBtn $on><CandleI /></ToolBtn>
      <ToolBtn><LineI /></ToolBtn>
      <Sep />
      <ToolBtn><Lens /></ToolBtn>
      <ToolBtn><Lens minus /></ToolBtn>
      <ToolBtn><TileI /></ToolBtn>
      <Sep $w={9} />
      <ToolBtn $on><ScrollI /></ToolBtn>
      <ToolBtn><ShiftI /></ToolBtn>
      <Sep />
      <ToolBtn $w={51}><TemplI /><Caret /></ToolBtn>
      <ToolBtn $w={50}><ClockI /><Caret /></ToolBtn>
      <ToolBtn $w={50}><IndI /><Caret /></ToolBtn>
    </Tools>
  </ToolRow>
);
const Toolbar2 = () => (
  <ToolRow $h={36}>
    <Tools $w={762}>
      <Grip $gap={0} />
      <ToolBtn $w={36} $on><CursorI /></ToolBtn>
      <ToolBtn $w={44}><ThinCross /></ToolBtn>
      <Sep />
      <ToolBtn><VertI /></ToolBtn>
      <ToolBtn><HorzI /></ToolBtn>
      <ToolBtn><TrendI /></ToolBtn>
      <ToolBtn><ChanI /></ToolBtn>
      <ToolBtn><FibI /></ToolBtn>
      <ToolBtn><LetterA>A</LetterA></ToolBtn>
      <ToolBtn><TextBoxI /></ToolBtn>
      <ToolBtn $w={48}><ArrowsI /><Caret /></ToolBtn>
      <Sep $w={4} />
      <Grip />
      {["M1", "M5", "M15", "M30", "H1"].map(t => <TfBtn key={t}>{t}</TfBtn>)}
      <TfBtn $on>H4</TfBtn>
      {["D1", "W1", "MN"].map(t => <TfBtn key={t}>{t}</TfBtn>)}
    </Tools>
  </ToolRow>
);

const Watch = () => (
  <>
    <PanelHead><PanelBar $size={16}>気配値表示: 09:32:06</PanelBar><PanelX>×</PanelX></PanelHead>
    <WatchWrap>
      <Table>
        <HeadRow><HeadCell>通貨ペア</HeadCell><HeadCell $right>Bid</HeadCell><HeadCell $right>Ask</HeadCell></HeadRow>
        {quotes.map(([n, up, b, a]) => (
          <QuoteRow key={n}>
            <NameCell>{up ? <ArrowUpI /> : <ArrowDownI />}{n}</NameCell>
            <PriceCell $up={up}>{b}</PriceCell>
            <PriceCell $up={up} $last>{a}</PriceCell>
          </QuoteRow>
        ))}
      </Table>
      <Scroll>
        <ScrollEnd><ChevUp /></ScrollEnd>
        <ScrollThumb />
        <ScrollRest />
        <ScrollEnd><ChevDown /></ScrollEnd>
      </Scroll>
    </WatchWrap>
    <Tabs><Tab>通貨ペアリスト</Tab><TabOff>ティックチャート</TabOff></Tabs>
    <NavGap />
    <PanelHead><PanelBar $size={14}>ナビゲーター</PanelBar><PanelX>×</PanelX></PanelHead>
    <NavTree>
      <TreeRoot><ChartsDocI />XMTrading</TreeRoot>
      {[["口座", <AccI />], ["インディケータ", <IndTreeI />], ["エキスパートアドバイザ", <ExpertI />], ["スクリプト", <ScriptI />]].map(([t, i]) => (
        <TreeRow key={t as string}><PlusBox /><TreeDots />{i}<TreeLabel>{t}</TreeLabel></TreeRow>
      ))}
    </NavTree>
  </>
);

const OrderDialog = () => (
  <Dialog>
    <DlgTitle>
      オーダーの発注
      <DlgCtl>
        <svg width="20" height="20" viewBox="0 0 20 20"><path d="M1 10h18" stroke="#111" strokeWidth="2" /></svg>
        <svg width="20" height="20" viewBox="0 0 20 20"><rect x="1.5" y="1.5" width="17" height="17" fill="none" stroke="#ccc" strokeWidth="2" /></svg>
        <svg width="20" height="20" viewBox="0 0 20 20"><path d="M1 1l18 18M19 1L1 19" stroke="#111" strokeWidth="1.7" /></svg>
      </DlgCtl>
    </DlgTitle>
    <DlgBody>
      <Sunken><PreviewChart /></Sunken>
      <Right>
        <Form>
          <Label>通貨ペア :</Label>
          <Combo>EURUSD, Euro vs US Dollar<svg width="16" height="10" viewBox="0 0 16 10"><path d="M1 1l7 7 7-7" fill="none" stroke="#444" strokeWidth="1.5" /></svg></Combo>
          <Label>数量 :</Label><span />
          <Label>決済逆指値(S/L)</Label><span />
          <Label>コメント :</Label><span />
          <Label>注文種別 :</Label><span />
        </Form>
        <Group>
          <Legend>成行注文</Legend>
          <Price>0.9550<PriceSmall>6</PriceSmall><PriceSlash>/</PriceSlash>0.9552<PriceSmall>2</PriceSmall></Price>
          <Actions>
            <Trade><TradeFace>成行売り</TradeFace></Trade>
            <Trade><TradeFace $buy>成行買い</TradeFace></Trade>
          </Actions>
          <ProgressBar />
          <Note><NoteWide>ご注意！ 成行注文は、市場状況によって約定価格が決まりますので、必ずしも提示</NoteWide><br />価格で約定するとは限りません!</Note>
        </Group>
        <DropList>
          <DropInner>{symbols.map((s, i) => <DropItem key={s} $covered={i === 1}>{s}</DropItem>)}</DropInner>
        </DropList>
        <Highlight><HighlightItem>EURUSD, Euro vs US Dollar</HighlightItem></Highlight>
      </Right>
    </DlgBody>
  </Dialog>
);

export default function App() {
  return (
    <>
      <Global />
      <Stage>
        <StageTop><Dot /></StageTop>
        <Win>
          <MenuBar>
            {[["ファイル (F)", 93], ["表示 (V)", 82], ["挿入(I)", 71], ["チャート (C)", 94], ["ツール (T)", 84], ["ウィンドウ (W)", 111], ["ヘルプ (H)", 80]].map(([t, w]) => (
              <MenuItem key={t as string} $w={w as number}>{t}</MenuItem>
            ))}
          </MenuBar>
          <Toolbar1 />
          <Toolbar2 />
          <DarkLine />
          <Work>
            <Side><Watch /></Side>
            <Mdi>
              <ChartWin $active>
                <ChartTitle $active><ChartsDocI />EURUSD,H4
                  <TitleBtns>
                    <TitleBtn><svg width="16" height="8" viewBox="0 0 16 8"><rect x=".5" y=".5" width="15" height="7" fill="#eee" stroke="#777" /></svg></TitleBtn>
                    <TitleBtn><svg width="14" height="14" viewBox="0 0 14 14"><rect x="1" y="1" width="12" height="12" fill="#eee" stroke="#556" strokeWidth="1.5" /><rect x="4" y="5" width="6" height="3" fill="#667" /></svg></TitleBtn>
                    <TitleBtn $close><svg width="14" height="12" viewBox="0 0 14 12"><path d="M2 1l10 10M12 1L2 11" stroke="#fff" strokeWidth="3" /></svg></TitleBtn>
                  </TitleBtns>
                </ChartTitle>
                <TopLeftChart />
              </ChartWin>
              <ChartWin $right>
                <ChartTitle><ChartsDocI faded />GBPUSD,H4</ChartTitle>
                <TopRightChart />
              </ChartWin>
              <ChartWin>
                <ChartTitle><ChartsDocI faded /></ChartTitle>
                <BottomLeftChart />
              </ChartWin>
              <ChartWin $right>
                <ChartTitle />
                <BottomRightChart />
              </ChartWin>
            </Mdi>
            <OrderDialog />
          </Work>
        </Win>
      </Stage>
    </>
  );
}
